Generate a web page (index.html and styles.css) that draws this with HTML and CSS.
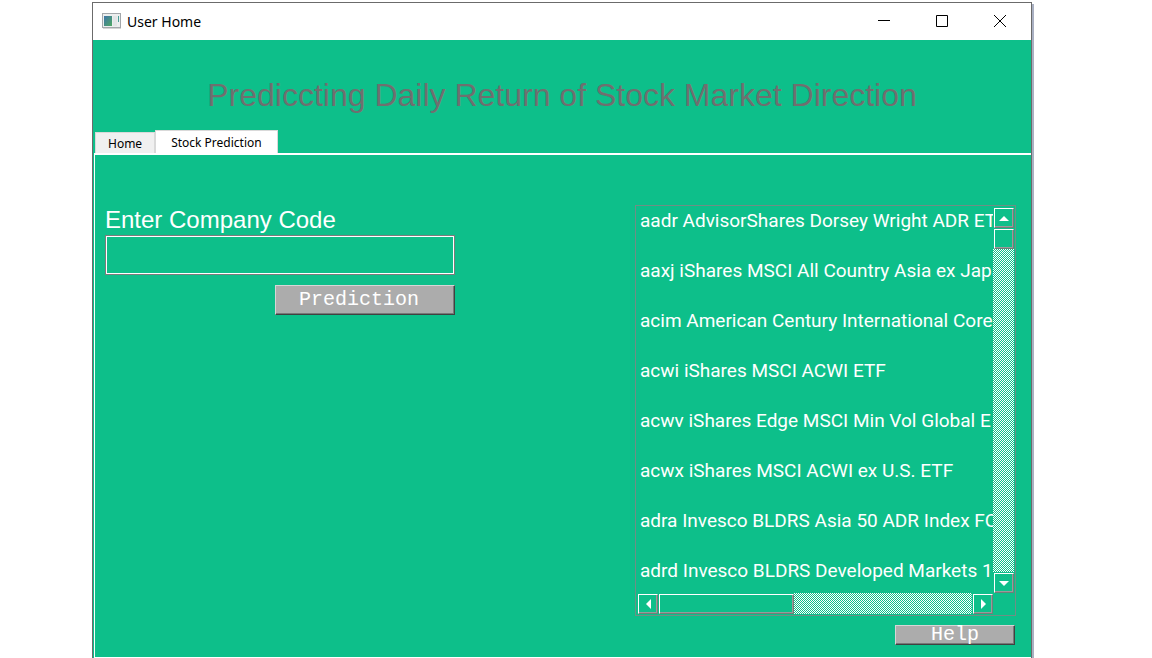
FILE: index.html
```html
<!DOCTYPE html>
<html lang="en">
<head>
<meta charset="utf-8">
<title>User Home</title>
<link rel="stylesheet" href="styles.css">
</head>
<body>
<div class="window">
  <header class="titlebar">
    <svg class="app-icon" width="19" height="16" viewBox="0 0 19 16" aria-hidden="true">
      <defs><linearGradient id="screen" x1="0" y1="0" x2="1" y2="1"><stop offset="0" stop-color="#3f74a8"/><stop offset="1" stop-color="#4fa863"/></linearGradient></defs>
      <rect x=".5" y=".5" width="18" height="14" fill="#eceeee" stroke="#a3a7ab"/>
      <rect x="2" y="3" width="8" height="10" fill="url(#screen)"/>
      <rect x="11" y="3" width="4" height="10" fill="#e2e5e6"/>
      <rect x="16" y="3" width="1" height="6" fill="#4a9c96"/>
      <path d="M1 15.500h18" stroke="#d5d5d5"/>
    </svg>
    <span class="window-title">User Home</span>
    <button class="caption" aria-label="Minimize"><svg width="12" height="12" viewBox="0 0 12 12"><path d="M0 5.500h12"/></svg></button>
    <button class="caption" aria-label="Maximize"><svg width="12" height="12" viewBox="0 0 12 12"><path d="M.5.5h11v11H.5z"/></svg></button>
    <button class="caption" aria-label="Close"><svg width="12" height="12" viewBox="0 0 12 12"><path d="M0 0l12 12M12 0L0 12"/></svg></button>
  </header>
  <h1 class="heading">Prediccting Daily Return of Stock Market Direction</h1>
  <div class="tabs" role="tablist">
    <button class="tab" role="tab" aria-selected="false">Home</button>
    <button class="tab tab-active" role="tab" aria-selected="true">Stock Prediction</button>
  </div>
  <main class="pane">
    <form class="form">
      <label class="label" for="code">Enter Company Code</label>
      <input class="field" id="code" type="text">
      <button class="button predict" type="button">Prediction</button>
    </form>
    <section class="side">
      <div class="listbox">
        <ul class="items">
          <li>aadr AdvisorShares Dorsey Wright ADR ET</li>
          <li>aaxj iShares MSCI All Country Asia ex Japa</li>
          <li>acim American Century International Core</li>
          <li>acwi iShares MSCI ACWI ETF</li>
          <li>acwv iShares Edge MSCI Min Vol Global E</li>
          <li>acwx iShares MSCI ACWI ex U.S. ETF</li>
          <li>adra Invesco BLDRS Asia 50 ADR Index FO</li>
          <li>adrd Invesco BLDRS Developed Markets 1</li>
        </ul>
        <div class="scroll scroll-v">
          <button class="arrow" aria-label="Scroll up"><svg width="10" height="5" viewBox="0 0 10 5"><path d="M5 0l5 5H0z"/></svg></button>
          <div class="thumb"></div>
          <svg class="trough" aria-hidden="true">
            <defs><pattern id="dots" width="2" height="2" patternUnits="userSpaceOnUse"><path d="M0 0h1v1H0zM1 1h1v1H1z" fill="#fff" shape-rendering="crispEdges"/></pattern></defs>
            <rect width="100%" height="100%" fill="url(#dots)"/>
          </svg>
          <button class="arrow" aria-label="Scroll down"><svg width="10" height="5" viewBox="0 0 10 5"><path d="M0 0h10L5 5z"/></svg></button>
        </div>
        <div class="scroll scroll-h">
          <button class="arrow" aria-label="Scroll left"><svg width="5" height="10" viewBox="0 0 5 10"><path d="M5 0v10L0 5z"/></svg></button>
          <div class="thumb"></div>
          <svg class="trough" aria-hidden="true"><rect width="100%" height="100%" fill="url(#dots)"/></svg>
          <button class="arrow" aria-label="Scroll right"><svg width="5" height="10" viewBox="0 0 5 10"><path d="M0 0l5 5-5 5z"/></svg></button>
        </div>
      </div>
      <button class="button help" type="button">Help</button>
    </section>
  </main>
</div>
</body>
</html>
```
FILE: styles.css
```css
* { box-sizing: border-box; }

body {
  margin: 0;
  padding: 2px 120px 0 92px;
  background: #fff;
  color: #fff;
  font-family: "Liberation Sans", Arial, sans-serif;
}

button, input { margin: 0; font: inherit; color: inherit; }

.window {
  display: flex;
  flex-direction: column;
  min-height: calc(100vh - 2px);
  border: 1px solid #6b6b6b;
  border-bottom: 0;
  background: #0dbf8a;
  box-shadow: 2px 2px 0 #a9b0c2;
}

.titlebar {
  display: flex;
  align-items: center;
  height: 37px;
  padding: 0 2px 1px 9px;
  background: #fff;
  color: #000;
}

.window-title {
  flex: 1;
  margin-left: 6px;
  font: 14px "Noto Sans", "Open Sans", sans-serif;
}

.caption {
  display: grid;
  place-items: center;
  width: 58px;
  height: 36px;
  padding: 0;
  border: 0;
  background: none;
}

.caption svg { fill: none; stroke: #000; }

.heading {
  margin: 0;
  padding-top: 35px;
  color: #6f6f6f;
  font-size: 32px;
  font-weight: 400;
  line-height: 40px;
  text-align: center;
}

.tabs {
  display: flex;
  align-items: flex-end;
  margin: 15px 0 -1px;
  padding-left: 2px;
}

.tab {
  height: 21px;
  margin-bottom: 1px;
  padding: 0 12px;
  border: 1px solid #d9d9d9;
  border-bottom: 0;
  background: #f0f0f0;
  color: #000;
  font: 12px "Noto Sans", "Open Sans", sans-serif;
}

.tab-active {
  height: 24px;
  margin-bottom: 0;
  padding: 0 15px;
  background: #fff;
}

.pane {
  flex: 1;
  display: grid;
  grid-template-columns: 350fr 381fr;
  gap: 180px;
  align-items: start;
  margin-left: 1px;
  padding: 50px 15px 12px 10px;
  border: solid #fff;
  border-width: 2px 0 1px 1px;
}

.form {
  display: flex;
  flex-direction: column;
}

.label {
  font-size: 24px;
  line-height: 30px;
}

.field {
  width: 100%;
  height: 40px;
  padding: 0 6px;
  border: 1px solid #7c7c7c;
  background: none;
  box-shadow: inset 0 0 0 1px #fff;
  font-size: 20px;
}

.button {
  padding: 0;
  border: 1px solid;
  border-color: #d6d6d6 #414141 #414141 #d6d6d6;
  background: #acacac;
  box-shadow: inset -1px -1px 0 #777;
  font-family: "Liberation Mono", "Courier New", monospace;
  font-size: 20px;
  line-height: 20px;
}

.predict {
  align-self: flex-end;
  width: 180px;
  height: 30px;
  margin-top: 10px;
  padding-right: 12px;
}

.side {
  display: flex;
  flex-direction: column;
}

.listbox {
  display: grid;
  grid-template: 386px 21px / minmax(0, 1fr) 21px;
  padding: 1px;
  border: 1px solid #6f8f84;
}

.items {
  margin: 0;
  padding: 0 0 0 3px;
  overflow: hidden;
  list-style: none;
  font-family: Roboto, "Liberation Sans", sans-serif;
  font-size: 19px;
  line-height: 28px;
  white-space: nowrap;
}

.items li { height: 50px; }

.scroll { display: flex; }

.scroll-v { flex-direction: column; }

.arrow, .thumb {
  flex: none;
  width: 20px;
  height: 20px;
  margin: 1px 0 0 1px;
  padding: 0;
  border: 1px solid;
  border-color: #fff #6f7f78 #6f7f78 #fff;
  background: none;
  box-shadow: inset -1px -1px 0 #9a9a9a;
}

.arrow {
  display: grid;
  place-items: center;
}

.arrow svg { fill: #fff; }

.scroll-h .thumb { width: 38%; }

.trough {
  flex: 1;
  min-width: 0;
  min-height: 0;
}

.scroll-v .trough { width: 21px; }

.scroll-h .trough { height: 21px; }

.help {
  align-self: flex-end;
  width: 120px;
  height: 20px;
  margin: 9px 1px 0 0;
  line-height: 18px;
}
```
